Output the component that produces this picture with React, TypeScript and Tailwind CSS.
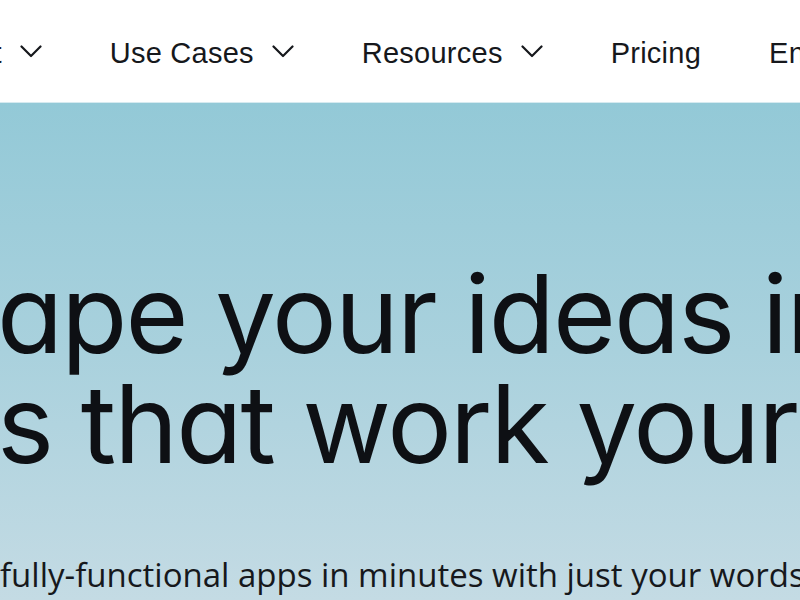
const NAV = [
  { label: "Product", menu: true },
  { label: "Use Cases", menu: true },
  { label: "Resources", menu: true },
  { label: "Pricing", menu: false },
  { label: "Enterprise", menu: false },
];

function Chevron() {
  return (
    <svg width="22" height="13" viewBox="0 0 22 13" fill="none" className="-mt-[3px] shrink-0">
      <path d="M1.5 1.5 11 11l9.5-9.5" stroke="#16181c" strokeWidth="2.2" strokeLinecap="round" strokeLinejoin="round" />
    </svg>
  );
}

function Header() {
  return (
    <header className="h-[102px] bg-white flex items-center pt-[4px] overflow-hidden shrink-0">
      <nav className="flex items-center gap-[68px] -ml-[100px] whitespace-nowrap">
        {NAV.map((item) => (
          <a
            key={item.label}
            className="flex items-center gap-[18px] text-[29px] leading-[36px] tracking-[0.25px] text-[#16181c] font-['Liberation_Sans',sans-serif]"
          >
            <span>{item.label}</span>
            {item.menu && <Chevron />}
          </a>
        ))}
      </nav>
    </header>
  );
}

function Hero() {
  return (
    <section className="flex-1 flex flex-col overflow-hidden bg-gradient-to-b from-[#93c9d7] via-[#a9d1dd] to-[#c4dbe4] border-t border-[#d6eaf0]">
      <h1 className="mt-[156px] -ml-[3px] whitespace-nowrap text-[108px] leading-[110px] font-normal tracking-[-0.017em] text-[#0e1014] font-['Inter',sans-serif] [font-feature-settings:'cv11']">
        <span className="block">ape your ideas into</span>
        <span className="block">s that work your way</span>
      </h1>
      <p className="mt-[76px] whitespace-nowrap text-[33px] leading-[40px] text-[#16181c] font-['Open_Sans',sans-serif]">
        fully-functional apps in minutes with just your words.
      </p>
    </section>
  );
}

export default function App() {
  return (
    <div className="w-full h-screen flex flex-col overflow-hidden bg-white">
      <Header />
      <Hero />
    </div>
  );
}
